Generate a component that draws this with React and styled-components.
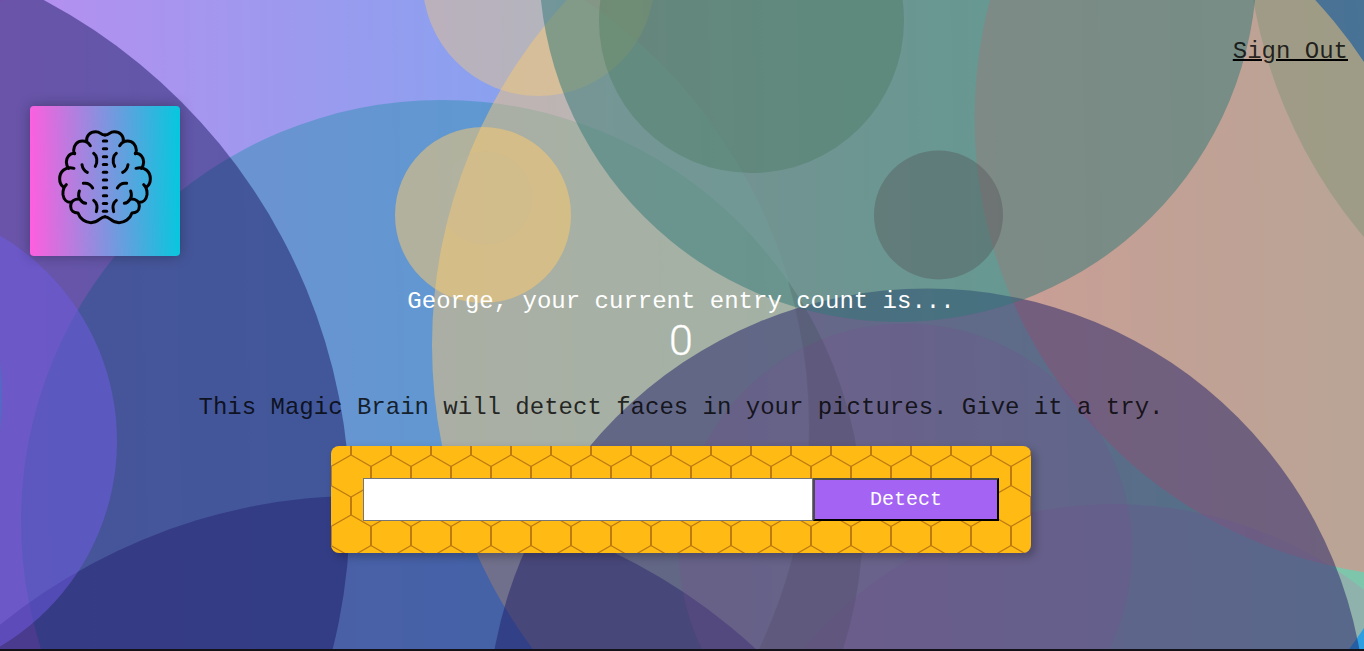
import React from 'react';
import styled, { createGlobalStyle } from 'styled-components';

const GlobalStyle = createGlobalStyle`
  * { box-sizing: border-box; }
  html, body { margin: 0; height: 100%; overflow: hidden; }
  body { font-family: "Courier New", "Liberation Mono", monospace; }
`;

const Page = styled.div`
  position: relative;
  height: 651px;
  overflow: hidden;
  display: flex;
  flex-direction: column;
  border-bottom: 2px solid #131218;
  background: linear-gradient(89deg, #ff5edf 0%, #04c8de 100%);
`;

const Bubbles = styled.svg`
  position: absolute;
  inset: 0;
  width: 1364px;
  height: 649px;
`;

const Content = styled.div`
  position: relative;
  flex: 1;
  display: flex;
  flex-direction: column;
`;

const Nav = styled.nav`
  display: flex;
  justify-content: flex-end;
  height: 106px;
  padding: 38px 16px 0;
`;

const SignOut = styled.a`
  font-size: 24px;
  line-height: 28px;
  color: rgba(0, 0, 0, 0.8);
  text-decoration: underline #000;
  text-decoration-thickness: 2px;
  cursor: pointer;
`;

const Logo = styled.div`
  width: 150px;
  height: 150px;
  margin-left: 30px;
  border-radius: 4px;
  background: linear-gradient(89deg, #ff5edf 0%, #04c8de 100%);
  box-shadow: 0 0 14px rgba(0, 0, 0, 0.3);

  svg { display: block; }
`;

const Rank = styled.section`
  margin-top: 32px;
  padding-right: 2px;
  text-align: center;
  color: #fff;
`;

const RankLabel = styled.div`
  font-size: 24px;
  line-height: 28px;
`;

const RankCount = styled.div`
  font-family: Roboto, "Liberation Sans", sans-serif;
  font-weight: 300;
  font-size: 43px;
  line-height: 49px;
  height: 53px;
  -webkit-text-stroke: 0.3px #fff;
`;

const Intro = styled.p`
  margin: 25px 0 24px;
  padding-right: 2px;
  font-size: 24px;
  line-height: 28px;
  text-align: center;
  color: rgba(0, 0, 0, 0.8);
`;

const Form = styled.form`
  position: relative;
  display: flex;
  width: 700px;
  height: 107px;
  padding: 32px;
  border-radius: 8px;
  overflow: hidden;
  background: #ffba13;
`;

const FormShadow = styled.div`
  align-self: center;
  margin-right: 2px;
  border-radius: 8px;
  box-shadow: 4px 4px 8px rgba(0, 0, 0, 0.25);
`;

const Honeycomb = styled.svg`
  position: absolute;
  inset: 0;
`;

const UrlInput = styled.input`
  position: relative;
  width: 450px;
  height: 43px;
  padding: 8px;
  border: 1px solid #767676;
  background: #fff;
  font: 20px "Courier New", "Liberation Mono", monospace;
`;

const DetectButton = styled.button`
  position: relative;
  width: 186px;
  height: 43px;
  padding: 0;
  border: 2px solid;
  border-color: #4c4c4c #000 #000 #4c4c4c;
  background: #a463f2;
  color: #fff;
  font: 20px "Courier New", "Liberation Mono", monospace;
`;

const Taskbar = styled.div`
  position: absolute;
  left: 459px;
  bottom: -2px;
  width: 34px;
  height: 2px;
  background: #3a3a40;
`;

// x, y, radius, rgb, opacity; painted from back to front
const circles = [
  [293, 427, 517, '114,190,255', 0.5],
  [442, 521, 421, '52,143,180', 0.5],
  [1434, 118, 459.5, '247,63,136', 0.5],
  [1745, -85, 499, '18,98,120', 0.5],
  [1114, 911, 407, '110,88,230', 0.36],
  [941, 345, 509, '244,198,120', 0.5],
  [538.5, -20, 116, '251,204,114', 0.4],
  [364, 1072.5, 577, '30,18,104', 0.4],
  [927, 728, 439.5, '32,30,104', 0.5],
  [905.5, 550, 226.5, '120,80,145', 0.25],
  [898, -37, 359, '47,119,120', 0.5],
  [751.5, 20.5, 152.5, '52,104,68', 0.25],
  [938.5, 215, 64.5, '80,74,80', 0.34],
  [483, 215, 88, '255,204,108', 0.5],
  [485.5, 198, 46.5, '188,180,172', 0.12],
  [-226, 509, 576, '28,26,99', 0.5],
  [-122, 441, 239, '112,91,229', 0.5],
  [-323, 396, 325, '50,130,195', 0.4],
];

const half = [
  'M315 165 C300 165 303 155 287 155 C270 155 258 168 260 184',
  'M271 197 C265 187 258 183 247 183 C232 183 221 196 221 211 C221 216 222 219 224 221',
  'M224 220 C208 220 199 232 199 246 C199 254 202 260 206 265',
  'M222 265 C196 258 179 275 179 296 C179 306 183 315 189 320',
  'M199 314 C190 322 188 332 189 344 C191 359 201 368 213 367',
  'M238 333 C234 344 236 352 240 358 C245 366 249 369 257 370',
  'M236 357 C224 357 212 364 212 379 C212 392 222 399 234 399 C240 417 256 428 273 428 C297 428 300 410 315 410',
  'M281 220 C291 227 294 245 286 259',
  'M246 254 C248 266 254 273 262 277',
  'M250 310 C262 308 272 313 278 324',
  'M281 361 C290 368 293 381 289 395',
];

function BrainHalf({ transform }) {
  return (
    <g transform={transform}>
      {half.map((d) => <path key={d} d={d} />)}
    </g>
  );
}

function Brain() {
  return (
    <svg width="150" height="150" viewBox="90 78 450 450" fill="none" stroke="#000" strokeWidth="9" strokeLinecap="round" strokeLinejoin="round">
      <BrainHalf />
      <BrainHalf transform="matrix(-1 0 0 1 630 0)" />
      {[183, 206.5, 230, 253.5, 277, 300, 323.5, 347, 370.5, 394].map((y) => (
        <path key={y} d={`M310 ${y}H320`} />
      ))}
    </svg>
  );
}

export default function App() {
  return (
    <Page>
      <GlobalStyle />
      <Bubbles viewBox="0 0 1364 649">
        {circles.map(([x, y, r, rgb, o]) => (
          <circle key={`${x}-${y}`} cx={x} cy={y} r={r} fill={`rgb(${rgb})`} fillOpacity={o} />
        ))}
        <path
          d="M788 281A421 421 0 0 1 843 649H759A517 517 0 0 0 788 281Z"
          fill="rgb(63,67,76)"
          fillOpacity="0.17"
        />
      </Bubbles>
      <Content>
        <Nav>
          <SignOut>Sign Out</SignOut>
        </Nav>
        <Logo><Brain /></Logo>
        <Rank>
          <RankLabel>George, your current entry count is...</RankLabel>
          <RankCount>0</RankCount>
        </Rank>
        <Intro>This Magic Brain will detect faces in your pictures. Give it a try.</Intro>
        <FormShadow>
          <Form onSubmit={(e) => e.preventDefault()}>
            <Honeycomb width="700" height="107">
              <defs>
                <pattern id="comb" width="40" height="60" patternUnits="userSpaceOnUse">
                  <g fill="none" stroke="#bd7b12">
                    <path strokeWidth="2" d="M20 0V9M20 50.5V60M0 20V40M40 20V40" />
                    <path strokeWidth="1.3" d="M0 20.5L20 9L40 20.5M0 39.5L20 51L40 39.5" />
                  </g>
                </pattern>
              </defs>
              <rect width="700" height="107" fill="url(#comb)" />
            </Honeycomb>
            <UrlInput type="text" />
            <DetectButton type="button">Detect</DetectButton>
          </Form>
        </FormShadow>
      </Content>
      <Taskbar />
    </Page>
  );
}
